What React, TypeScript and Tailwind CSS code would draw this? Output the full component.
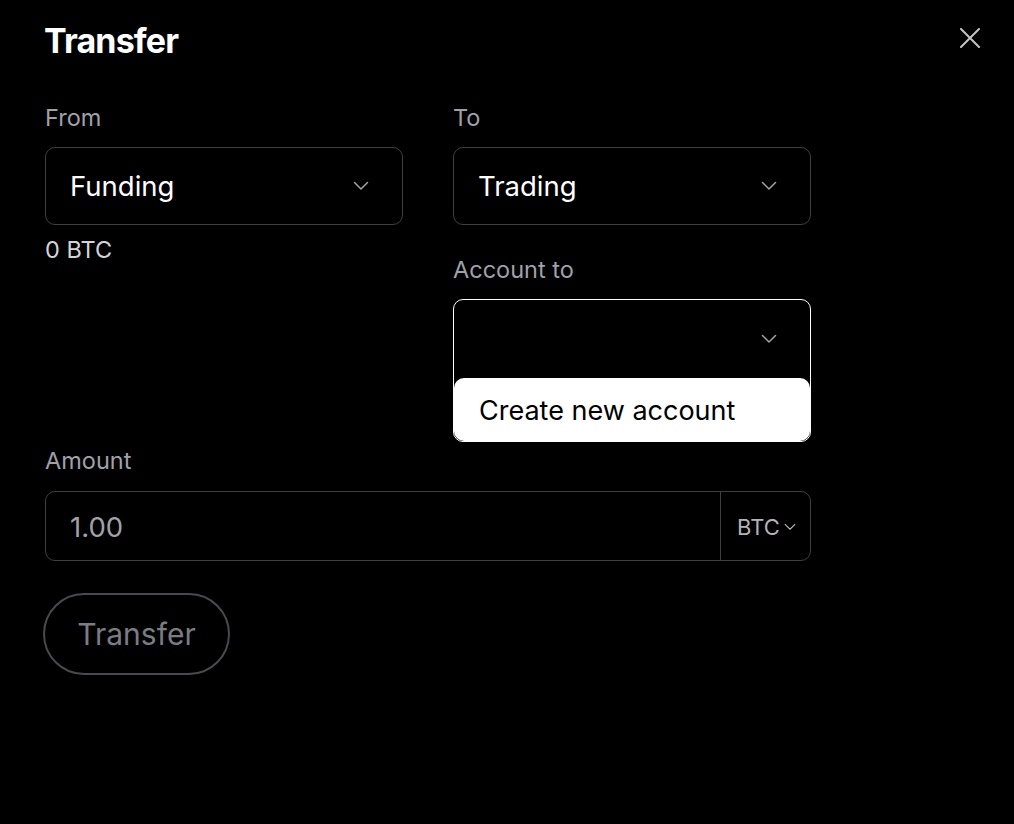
import React from "react";

const Chevron = ({ className = "" }: { className?: string }) => (
  <svg className={className} width="16" height="10" viewBox="0 0 16 10" fill="none">
    <path d="M1.5 1.5 L8 8 L14.5 1.5" stroke="currentColor" strokeWidth="1.5" strokeLinecap="round" strokeLinejoin="round" />
  </svg>
);

export default function App() {
  return (
    <div className="min-h-[824px] w-full bg-black text-white" style={{ fontFamily: "Inter, 'Liberation Sans', sans-serif" }}>
      <div className="pl-[45px] pr-[34px]">
        <div className="flex items-start justify-between">
          <h1 className="-ml-[1px] mt-[21px] text-[34px] font-bold leading-[40px] tracking-[-0.025em] text-white">Transfer</h1>
          <button className="mt-[28px] text-[#c4c4c4]" aria-label="close">
            <svg width="20" height="20" viewBox="0 0 20 20" fill="none">
              <path d="M1 1 L19 19 M19 1 L1 19" stroke="currentColor" strokeWidth="2" strokeLinecap="round" />
            </svg>
          </button>
        </div>

        <div className="mt-[45px] flex gap-[50px]">
          <div className="w-[358px]">
            <div className="text-[23.5px] leading-[24px] text-[#a1a1aa]">From</div>
            <div className="mt-[17px] flex h-[78px] items-center justify-between rounded-[10px] border border-[#3f3f42] pl-[24px] pr-[33px]">
              <span className="pt-[2px] text-[27.5px] text-white">Funding</span>
              <Chevron className="text-[#a3a3a3]" />
            </div>
            <div className="mt-[13px] text-[23.5px] leading-[24px] text-[#d4d4d8]">0 BTC</div>
          </div>

          <div className="w-[358px]">
            <div className="text-[23.5px] leading-[24px] text-[#a1a1aa]">To</div>
            <div className="mt-[17px] flex h-[78px] items-center justify-between rounded-[10px] border border-[#3f3f42] pl-[24px] pr-[33px]">
              <span className="pt-[2px] text-[27.5px] text-white">Trading</span>
              <Chevron className="text-[#a3a3a3]" />
            </div>
            <div className="mt-[33px] text-[23.5px] leading-[24px] text-[#a1a1aa]">Account to</div>
            <div className="mt-[17px] rounded-[10px] border border-white">
              <div className="flex h-[78px] items-center justify-end pr-[33px]">
                <Chevron className="text-[#a3a3a3]" />
              </div>
              <div className="flex h-[63px] items-center rounded-[10px] bg-white pl-[25px] pt-[3px]">
                <span className="text-[27px] text-black">Create new account</span>
              </div>
            </div>
          </div>
        </div>

        <div className="mt-[7px] text-[23.5px] leading-[24px] text-[#a1a1aa]">Amount</div>
        <div className="mt-[18px] flex h-[70px] w-[766px] items-stretch rounded-[10px] border border-[#3f3f42]">
          <div className="flex flex-1 items-center pl-[24px] pt-[3px] text-[27.5px] text-[#a1a1aa]">1.00</div>
          <div className="flex w-[90px] items-center justify-center gap-[4px] border-l border-[#3f3f42] pl-[2px] pt-[2px] text-[22px] text-[#b4b4b8]">
            <span>BTC</span>
            <Chevron className="h-[8px] w-[12px] text-[#b4b4b8]" />
          </div>
        </div>

        <button className="-ml-[2px] mt-[32px] flex h-[82px] w-[187px] items-center justify-center rounded-full border-2 border-[#4a4a4e] text-[30px] text-[#7c7c84]">
          Transfer
        </button>
      </div>
    </div>
  );
}
